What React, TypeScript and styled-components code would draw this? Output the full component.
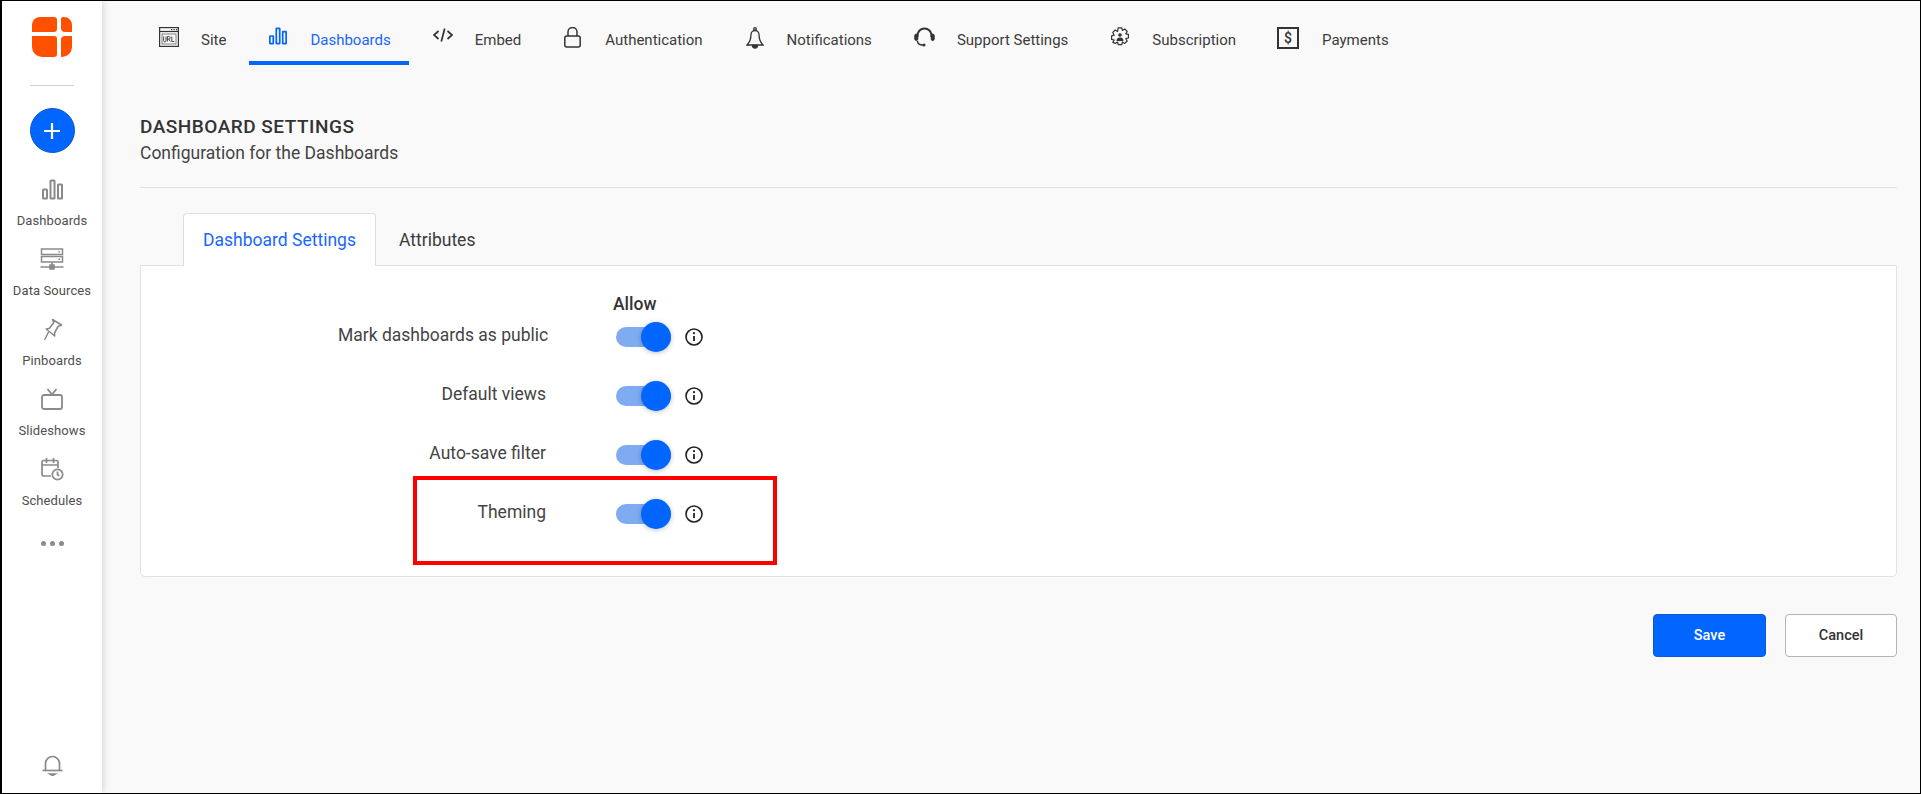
import React from "react";
import styled, { createGlobalStyle } from "styled-components";

const GlobalStyle = createGlobalStyle`
  html, body { margin: 0; padding: 0; height: 100%; background: #000; }
  body { font-family: Roboto, "Liberation Sans", sans-serif; }
  #root { height: 794px; }
  * { box-sizing: border-box; }
`;

const Frame = styled.div`
  position: relative;
  width: 1921px;
  height: 794px;
  display: flex;
  border-style: solid;
  border-color: #000;
  border-width: 1px 1px 1px 2px;
  background: #f9f9f9;
  overflow: hidden;
`;

const Sidebar = styled.aside`
  width: 100px;
  flex-shrink: 0;
  background: #fff;
  box-shadow: 2px 0 6px rgba(0, 0, 0, 0.12);
  display: flex;
  flex-direction: column;
  align-items: center;
  padding-top: 16px;
  padding-bottom: 17px;
`;

const Logo = styled.svg`
  width: 40px;
  height: 40px;
  display: block;
`;

const SideDivider = styled.div`
  width: 44px;
  height: 1px;
  background: #d2d2d2;
  margin: 28px 0 22px;
`;

const AddButton = styled.button`
  width: 45px;
  height: 45px;
  border-radius: 50%;
  background: #0066ff;
  border: 1px solid #0a56c8;
  padding: 0;
  display: flex;
  align-items: center;
  justify-content: center;
  margin-bottom: 24px;
`;

const SideItem = styled.div`
  height: 70px;
  width: 100%;
  display: flex;
  flex-direction: column;
  align-items: center;
  gap: 12px;
  font-size: 13px;
  line-height: 16px;
  letter-spacing: 0.1px;
  color: #4f4f4f;
  white-space: nowrap;
`;

const SideIconSlot = styled.div`
  height: 24px;
  display: flex;
  align-items: center;

  svg { display: block; }
`;

const MoreDots = styled.div`
  display: flex;
  gap: 4px;
  margin-top: 14px;

  span {
    width: 5px;
    height: 5px;
    border-radius: 50%;
    background: #8a8a8a;
  }
`;

const BottomBell = styled.div`
  margin-top: auto;
  line-height: 0;
`;

const Main = styled.main`
  flex: 1;
  min-width: 0;
  padding: 0 23px 0 38px;
`;

const TopNav = styled.nav`
  display: flex;
  height: 64px;
  margin-left: 9px;
  gap: 19px;
`;

const NavTab = styled.div<{ $active?: boolean; $gap: number; $pad: number; $end: number }>`
  display: flex;
  align-items: flex-start;
  height: 64px;
  padding: 26px ${(p) => p.$end}px 0 ${(p) => p.$pad}px;
  gap: ${(p) => p.$gap}px;
  font-size: 15px;
  line-height: 26px;
  color: ${(p) => (p.$active ? "#1a66ff" : "#3c3c3c")};
  border-bottom: 4px solid ${(p) => (p.$active ? "#0066ff" : "transparent")};
  white-space: nowrap;

  svg { display: block; flex-shrink: 0; }
`;

const PageHead = styled.header`
  padding-top: 52px;
  height: 123px;
  border-bottom: 1px solid #e2e2e2;
`;

const PageTitle = styled.h1`
  margin: 0;
  font-size: 19px;
  line-height: 20px;
  font-weight: 500;
  letter-spacing: 0.5px;
  color: #333;
`;

const PageSub = styled.p`
  margin: 6px 0 0;
  font-size: 17.5px;
  line-height: 20px;
  color: #444;
`;

const TabStrip = styled.div`
  display: flex;
  margin-top: 25px;
  padding-left: 43px;
  height: 53px;
  position: relative;
  z-index: 1;
`;

const PanelTab = styled.div<{ $active?: boolean }>`
  height: 53px;
  padding: 0 20px;
  width: ${(p) => (p.$active ? "193px" : "auto")};
  margin-left: ${(p) => (p.$active ? "0" : "2px")};
  display: flex;
  align-items: center;
  justify-content: center;
  font-size: 17.5px;
  white-space: nowrap;
  color: ${(p) => (p.$active ? "#1a66ff" : "#3c3c3c")};
  background: ${(p) => (p.$active ? "#fff" : "transparent")};
  border: 1px solid ${(p) => (p.$active ? "#dedede" : "transparent")};
  border-bottom: none;
  border-radius: 4px 4px 0 0;
`;

const Card = styled.section`
  height: 312px;
  background: #fff;
  border: 1px solid #e2e2e2;
  border-radius: 0 0 5px 5px;
  margin-top: -1px;
  padding: 28px 0 0 197px;
`;

const AllowHead = styled.div`
  margin-left: 275px;
  margin-bottom: -7px;
  font-size: 17.5px;
  line-height: 20px;
  font-weight: 500;
  color: #333;
`;

const SettingRow = styled.div`
  display: flex;
  align-items: center;
  height: 59px;
`;

const RowLabel = styled.div`
  width: 208px;
  text-align: right;
  font-size: 17.5px;
  color: #444;
  white-space: nowrap;
  position: relative;
  top: -2px;
`;

const Toggle = styled.div`
  position: relative;
  width: 55px;
  height: 20px;
  margin-left: 70px;
  border-radius: 10px;
  background: #7fabf0;
`;

const Thumb = styled.span`
  position: absolute;
  right: 0;
  top: -5px;
  width: 30px;
  height: 30px;
  border-radius: 50%;
  background: #0066ff;
  box-shadow: 0 1px 5px rgba(0, 0, 0, 0.25);
`;

const InfoIcon = styled.svg`
  margin-left: 14px;
  display: block;
`;

const Actions = styled.div`
  display: flex;
  justify-content: flex-end;
  gap: 19px;
  margin-top: 37px;
`;

const ActionButton = styled.button<{ $primary?: boolean }>`
  width: ${(p) => (p.$primary ? "113px" : "112px")};
  height: 43px;
  border-radius: 4px;
  font-family: inherit;
  font-size: 14.5px;
  font-weight: 500;
  color: ${(p) => (p.$primary ? "#fff" : "#333")};
  background: ${(p) => (p.$primary ? "#0066ff" : "#fff")};
  border: 1px solid ${(p) => (p.$primary ? "#0a5ad2" : "#b4b4b4")};
`;

const Callout = styled.div`
  position: absolute;
  left: 411px;
  top: 475px;
  width: 364px;
  height: 89px;
  border: 4px solid #ff0000;
  pointer-events: none;
`;

const BarsIcon = ({ color, size }: { color: string; size: number }) => (
  <svg width={size} height={size} viewBox="0 0 21 20" fill="none" stroke={color} strokeWidth="2">
    <rect x="1" y="10" width="4" height="9" rx="0.5" />
    <rect x="8.5" y="1" width="4" height="18" rx="0.5" />
    <rect x="16" y="5" width="4" height="14" rx="0.5" />
  </svg>
);

const grey = "#8a8a8a";
const dark = "#333";

const ServerIcon = () => (
  <svg width="24" height="22" viewBox="0 0 24 22" fill="none" stroke={grey} strokeWidth="1.5">
    <rect x="1.5" y="1" width="21" height="5.5" />
    <rect x="1.5" y="8.5" width="21" height="5.5" />
    <path d="M0.5 19h23M12 14v3" />
    <rect x="10" y="17" width="4" height="4" fill={grey} />
    <path d="M18.5 3.7h1.5M18.5 11.2h1.5" />
  </svg>
);

const PinIcon = () => (
  <svg width="22" height="23" viewBox="0 0 22 23" fill="none" stroke={grey} strokeWidth="1.6" strokeLinejoin="round">
    <path d="M11.5 1.5l9 5.5-3.5 1.5-3.5 6.5.2 3-8.5-7 3.3-.8 4.3-5.7z" />
    <path d="M7.5 14l-4 8" />
  </svg>
);

const TvIcon = () => (
  <svg width="22" height="22" viewBox="0 0 22 22" fill="none" stroke={grey} strokeWidth="1.8">
    <rect x="1" y="7" width="20" height="14" rx="2" />
    <path d="M6.5 1l4.5 5.5L15.5 1" />
  </svg>
);

const CalendarIcon = () => (
  <svg width="23" height="24" viewBox="0 0 23 24" fill="none" stroke={grey} strokeWidth="1.7">
    <path d="M10 19H3a2 2 0 0 1-2-2V5a1.5 1.5 0 0 1 1.5-1.5h13A1.5 1.5 0 0 1 17 5v6" />
    <path d="M1 8h16M5.5 1v5M12.5 1v5" />
    <circle cx="16.5" cy="17.5" r="5.2" />
    <path d="M16.5 14.5v3.2l2 1" />
  </svg>
);

const BellIcon = ({ color, w, h, sw }: { color: string; w: number; h: number; sw: number }) => (
  <svg width={w} height={h} viewBox="0 0 21 22" fill="none" stroke={color} strokeWidth={sw}>
    <path d="M3.5 16V9.5a7 7 0 0 1 14 0V16" />
    <path d="M0.5 16.5h20" />
    <path d="M8 20h5l-2.5 1.5z" fill={color} />
  </svg>
);

const UrlIcon = () => (
  <svg width="20" height="20" viewBox="0 0 20 20" fill="none" stroke={dark} strokeWidth="1.2">
    <rect x="0.6" y="0.6" width="18.8" height="18.8" />
    <path d="M0.6 4.5h18.8" />
    <path d="M12 2.6h1.2M14.5 2.6h1.2M17 2.6h1.2" />
    <rect x="3" y="7" width="14" height="10" strokeWidth="0.6" />
    <path d="M4.6 9.5v4.2a1 1 0 0 0 2.4 0V9.5M8.4 14.5v-5h1.4a1.2 1.2 0 0 1 0 2.6H8.4M10 12.2l1.2 2.3M12.8 9.5v5h2.4" strokeWidth="0.9" />
  </svg>
);

const CodeIcon = () => (
  <svg width="20" height="16" viewBox="0 0 20 16" fill="none" stroke={dark} strokeWidth="1.7">
    <path d="M5.5 4L1 8l4.5 4M14.5 4L19 8l-4.5 4M11.7 1.5L8.3 14.5" />
  </svg>
);

const LockIcon = () => (
  <svg width="17" height="21" viewBox="0 0 17 21" fill="none" stroke={dark} strokeWidth="1.5">
    <rect x="0.8" y="9" width="15.4" height="11" rx="2" />
    <path d="M4 9V5a4.5 4.5 0 0 1 9 0v4" />
  </svg>
);

const NotifyIcon = () => (
  <svg width="18" height="22" viewBox="0 0 18 22" fill="none" stroke={dark} strokeWidth="1.3">
    <circle cx="9" cy="2" r="1.3" />
    <path d="M5 7.5a4 4 0 0 1 8 0c0 5 1.5 8 4 10.5H1c2.5-2.5 4-5.5 4-10.5z" />
    <path d="M6.5 18.5a2.5 2.5 0 0 0 5 0z" fill={dark} />
  </svg>
);

const HeadsetIcon = () => (
  <svg width="21" height="20" viewBox="0 0 21 20" fill="none" stroke={dark} strokeWidth="2">
    <path d="M3.5 10V8.5a7 7 0 0 1 14 0V10" />
    <rect x="0.8" y="7" width="3" height="6.5" rx="1.5" fill={dark} strokeWidth="1" />
    <rect x="17.2" y="7" width="3" height="6.5" rx="1.5" fill={dark} strokeWidth="1" />
    <path d="M3.5 14c0 2.5 2 4 5.5 4" strokeWidth="1.5" />
    <circle cx="10" cy="18" r="1.5" fill={dark} stroke="none" />
  </svg>
);

const GearIcon = () => (
  <svg width="20" height="20" viewBox="0 0 20 20" fill="none" stroke={dark} strokeWidth="1.2" strokeLinejoin="round">
    <path d="M8.2 .8h3.6l.6 2.6 2.4-1.4 2.4 2.4-1.4 2.4 2.6.6v3.6l-2.6.6 1.4 2.4-2.4 2.4-2.4-1.4-.6 2.600H8.2l-.6-2.6-2.4 1.4L2.800 15.4l1.400-2.400-2.600-.6V8.800l2.600-.6L2.800 5.400 5.200 3l2.400 1.400z" />
    <circle cx="10" cy="8" r="1.8" fill={dark} stroke="none" />
    <path d="M6.500 14c0-2.500 1.500-3.500 3.500-3.500s3.500 1 3.500 3.500z" fill={dark} stroke="none" />
  </svg>
);

const DollarBox = styled.div`
  width: 22px;
  height: 22px;
  border: 2px solid #333;
  font-size: 14px;
  line-height: 18px;
  font-weight: 500;
  text-align: center;
  color: #333;
  flex-shrink: 0;
`;

const Info = () => (
  <InfoIcon width="18" height="18" viewBox="0 0 18 18" fill="none" stroke="#222">
    <circle cx="9" cy="9" r="8" strokeWidth="1.6" />
    <path d="M9 8v5" strokeWidth="1.8" />
    <circle cx="9" cy="5.2" r="1.1" fill="#222" stroke="none" />
  </InfoIcon>
);

const sideItems = [
  { label: "Dashboards", icon: <BarsIcon color={grey} size={21} /> },
  { label: "Data Sources", icon: <ServerIcon /> },
  { label: "Pinboards", icon: <PinIcon /> },
  { label: "Slideshows", icon: <TvIcon /> },
  { label: "Schedules", icon: <CalendarIcon /> },
];

const navTabs = [
  { label: "Site", icon: <UrlIcon />, pad: 10, gap: 22, end: 4 },
  { label: "Dashboards", icon: <BarsIcon color="#0066ff" size={18} />, pad: 20, gap: 23, end: 18, active: true },
  { label: "Embed", icon: <CodeIcon />, pad: 5, gap: 22, end: 23 },
  { label: "Authentication", icon: <LockIcon />, pad: 1, gap: 24, end: 24 },
  { label: "Notifications", icon: <NotifyIcon />, pad: 0, gap: 23, end: 23 },
  { label: "Support Settings", icon: <HeadsetIcon />, pad: 0, gap: 22, end: 23 },
  { label: "Subscription", icon: <GearIcon />, pad: 0, gap: 22, end: 22 },
  { label: "Payments", icon: <DollarBox>$</DollarBox>, pad: 0, gap: 23, end: 0 },
];

const settings = ["Mark dashboards as public", "Default views", "Auto-save filter", "Theming"];

export default function App() {
  return (
    <>
      <GlobalStyle />
      <Frame>
        <Sidebar>
          <Logo viewBox="0 0 40 40">
            <path d="M8 0h14a3 3 0 0 1 3 3v9a3 3 0 0 1-3 3H0V8a8 8 0 0 1 8-8z" fill="#ff5000" />
            <path d="M29 4a4 4 0 0 1 1-4h2a8 8 0 0 1 8 8v7H33a4 4 0 0 1-4-4z" fill="#ff5000" />
            <path d="M0 19h22a3 3 0 0 1 3 3v15a3 3 0 0 1-3 3H10A10 10 0 0 1 0 30z" fill="#ff5000" />
            <path d="M33 19h7v11a10 10 0 0 1-10 10h-1V23a4 4 0 0 1 4-4z" fill="#ff5000" />
          </Logo>
          <SideDivider />
          <AddButton aria-label="Add">
            <svg width="20" height="20" viewBox="0 0 20 20" stroke="#fff" strokeWidth="2.2">
              <path d="M10 2v16M2 10h16" />
            </svg>
          </AddButton>
          {sideItems.map((item) => (
            <SideItem key={item.label}>
              <SideIconSlot>{item.icon}</SideIconSlot>
              {item.label}
            </SideItem>
          ))}
          <MoreDots>
            <span />
            <span />
            <span />
          </MoreDots>
          <BottomBell>
            <BellIcon color={grey} w={21} h={22} sw={1.7} />
          </BottomBell>
        </Sidebar>
        <Main>
          <TopNav>
            {navTabs.map((tab) => (
              <NavTab key={tab.label} $active={tab.active} $gap={tab.gap} $pad={tab.pad} $end={tab.end}>
                {tab.icon}
                {tab.label}
              </NavTab>
            ))}
          </TopNav>
          <PageHead>
            <PageTitle>DASHBOARD SETTINGS</PageTitle>
            <PageSub>Configuration for the Dashboards</PageSub>
          </PageHead>
          <TabStrip>
            <PanelTab $active>Dashboard Settings</PanelTab>
            <PanelTab>Attributes</PanelTab>
          </TabStrip>
          <Card>
            <AllowHead>Allow</AllowHead>
            {settings.map((label) => (
              <SettingRow key={label}>
                <RowLabel>{label}</RowLabel>
                <Toggle>
                  <Thumb />
                </Toggle>
                <Info />
              </SettingRow>
            ))}
          </Card>
          <Actions>
            <ActionButton $primary>Save</ActionButton>
            <ActionButton>Cancel</ActionButton>
          </Actions>
        </Main>
        <Callout />
      </Frame>
    </>
  );
}
